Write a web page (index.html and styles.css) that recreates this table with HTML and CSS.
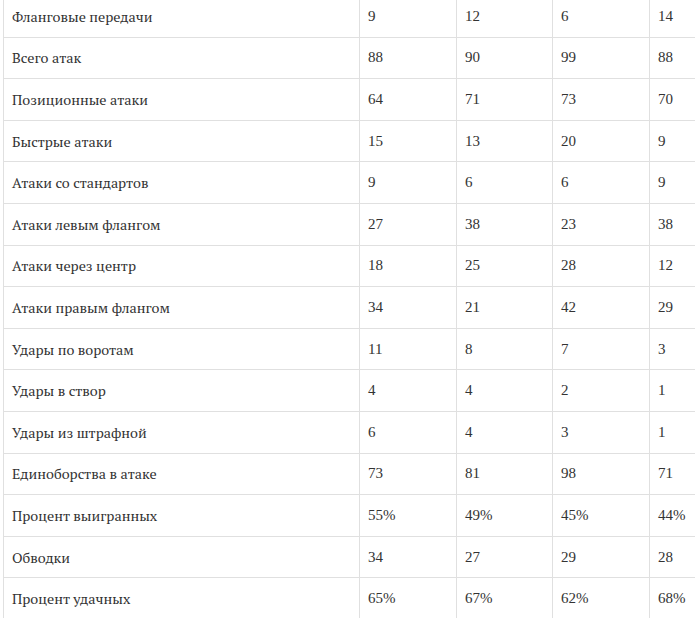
FILE: index.html
```html
<!DOCTYPE html>
<html lang="ru">
<head>
<meta charset="utf-8">
<link rel="stylesheet" href="styles.css">
</head>
<body>
<table class="stats">
<colgroup>
<col class="c-name">
<col class="c-a">
<col class="c-b">
<col class="c-c">
<col class="c-d">
</colgroup>
<tbody>
<tr><td class="name">Фланговые передачи</td><td>9</td><td>12</td><td>6</td><td>14</td></tr>
<tr><td class="name">Всего атак</td><td>88</td><td>90</td><td>99</td><td>88</td></tr>
<tr><td class="name">Позиционные атаки</td><td>64</td><td>71</td><td>73</td><td>70</td></tr>
<tr><td class="name">Быстрые атаки</td><td>15</td><td>13</td><td>20</td><td>9</td></tr>
<tr><td class="name">Атаки со стандартов</td><td>9</td><td>6</td><td>6</td><td>9</td></tr>
<tr><td class="name">Атаки левым флангом</td><td>27</td><td>38</td><td>23</td><td>38</td></tr>
<tr><td class="name">Атаки через центр</td><td>18</td><td>25</td><td>28</td><td>12</td></tr>
<tr><td class="name">Атаки правым флангом</td><td>34</td><td>21</td><td>42</td><td>29</td></tr>
<tr><td class="name">Удары по воротам</td><td>11</td><td>8</td><td>7</td><td>3</td></tr>
<tr><td class="name">Удары в створ</td><td>4</td><td>4</td><td>2</td><td>1</td></tr>
<tr><td class="name">Удары из штрафной</td><td>6</td><td>4</td><td>3</td><td>1</td></tr>
<tr><td class="name">Единоборства в атаке</td><td>73</td><td>81</td><td>98</td><td>71</td></tr>
<tr><td class="name">Процент выигранных</td><td>55%</td><td>49%</td><td>45%</td><td>44%</td></tr>
<tr><td class="name">Обводки</td><td>34</td><td>27</td><td>29</td><td>28</td></tr>
<tr><td class="name">Процент удачных</td><td>65%</td><td>67%</td><td>62%</td><td>68%</td></tr>
</tbody>
</table>
</body>
</html>
```
FILE: styles.css
```css
html {
  overflow: hidden;
  background: #fff;
}
body {
  margin: 0;
  font-family: "Liberation Serif", "Times New Roman", serif;
  font-size: 15px;
  color: #333;
}
.stats {
  border-collapse: collapse;
  table-layout: fixed;
  width: 693px;
  margin: -5px 0 0 3px;
}
.c-name { width: 356px; }
.c-a { width: 97px; }
.c-b { width: 96px; }
.c-c { width: 97px; }
.c-d { width: 47px; }
.stats td {
  border: 1px solid #e0e0e0;
  padding: 0 8px;
  height: 41.6px;
  box-sizing: border-box;
  vertical-align: middle;
  text-align: left;
  white-space: nowrap;
}
.stats td.name {
  font-family: "PT Serif", "Liberation Serif", serif;
  font-size: 14.3px;
}
```
